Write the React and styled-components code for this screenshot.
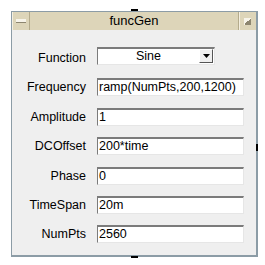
import React from "react"
import styled, { createGlobalStyle } from "styled-components"

const GlobalStyle = createGlobalStyle`
  html, body {
    margin: 0;
    padding: 0;
    background: #ffffff;
  }
  body {
    font-family: "Liberation Sans", Arial, sans-serif;
  }
`

const Page = styled.div`
  width: 265px;
  height: 265px;
  padding: 11px 0 0 11px;
  box-sizing: border-box;
`

const Window = styled.div`
  position: relative;
  width: 247px;
  height: 246px;
  box-sizing: border-box;
  border-left: 1px solid #8c9ca6;
  border-right: 2px solid #8c9ca6;
  border-bottom: 2px solid #8c9ca6;
  border-top: 1px solid #8c9ca6;
  background: #efefef;
  display: flex;
  flex-direction: column;
`

const Handle = styled.div`
  position: absolute;
  background: #000;
  width: ${(p) => (p.$side === "right" ? 2 : 7)}px;
  height: ${(p) => (p.$side === "right" ? 7 : 2)}px;
  ${(p) => p.$side === "top" && "top: -3px; left: 119px;"}
  ${(p) => p.$side === "bottom" && "bottom: -3px; left: 119px;"}
  ${(p) => p.$side === "right" && "right: -2px; top: 132px;"}
`

const TitleBar = styled.div`
  height: 18px;
  display: flex;
  align-items: stretch;
  background: #ddd5b9;
  flex-shrink: 0;
`

const TitleButton = styled.div`
  width: 17px;
  display: flex;
  align-items: center;
  justify-content: center;
  border-${(p) => (p.$right ? "left" : "right")}: 1px solid #b4ab8c;
  box-shadow: inset 1px 0 #f4efe0;
`

const MinusGlyph = styled.div`
  width: 10px;
  height: 3px;
  background: #f7f4ea;
  border-bottom: 1px solid #8d8670;
`

const MaxGlyph = styled.div`
  width: 7px;
  height: 7px;
  background: linear-gradient(135deg, #f7f4ea 50%, #8d8670 50%);
`

const Title = styled.div`
  flex: 1;
  text-align: center;
  font-size: 13px;
  line-height: 18px;
  color: #000;
`

const Form = styled.div`
  display: grid;
  grid-template-columns: 74px 147px;
  column-gap: 11px;
  row-gap: 11.4px;
  grid-auto-rows: 18px;
  padding: 19px 0 0 0;
  align-items: center;
`

const Label = styled.div`
  text-align: right;
  font-size: 12.5px;
  color: #000;
  line-height: 18px;
`

const Field = styled.div`
  height: 18px;
  box-sizing: border-box;
  background: #ffffff;
  border-top: 2px solid #7b7b7b;
  border-left: 1px solid #7b7b7b;
  border-right: 1px solid #e6e6e6;
  border-bottom: 1px solid #e6e6e6;
  font-size: 12.5px;
  line-height: 15px;
  padding-left: 1px;
  color: #000;
  white-space: nowrap;
  overflow: hidden;
`

const Select = styled.div`
  width: 118px;
  height: 18px;
  box-sizing: border-box;
  background: #ffffff;
  border-top: 2px solid #7b7b7b;
  border-left: 1px solid #7b7b7b;
  border-right: 1px solid #e6e6e6;
  border-bottom: 1px solid #e6e6e6;
  display: flex;
  align-items: stretch;
  margin-bottom: 4px;
`

const SelectText = styled.div`
  flex: 1;
  text-align: center;
  font-size: 12.5px;
  line-height: 15px;
`

const ArrowButton = styled.div`
  width: 14px;
  background: #efefef;
  border-right: 1px solid #555;
  border-bottom: 1px solid #555;
  border-top: 1px solid #fff;
  border-left: 1px solid #fff;
  box-sizing: border-box;
  display: flex;
  align-items: center;
  justify-content: center;
  margin: 0 1px 1px 0;
`

const fields = [
  ["Frequency", "ramp(NumPts,200,1200)"],
  ["Amplitude", "1"],
  ["DCOffset", "200*time"],
  ["Phase", "0"],
  ["TimeSpan", "20m"],
  ["NumPts", "2560"],
]

export default function App() {
  return (
    <Page>
      <GlobalStyle />
      <Window>
        <Handle $side="top" />
        <Handle $side="right" />
        <Handle $side="bottom" />
        <TitleBar>
          <TitleButton>
            <MinusGlyph />
          </TitleButton>
          <Title>funcGen</Title>
          <TitleButton $right>
            <MaxGlyph />
          </TitleButton>
        </TitleBar>
        <Form>
          <Label>Function</Label>
          <Select>
            <SelectText>Sine</SelectText>
            <ArrowButton>
              <svg width="7" height="4" viewBox="0 0 7 4">
                <polygon points="0,0 7,0 3.5,4" fill="#000" />
              </svg>
            </ArrowButton>
          </Select>
          {fields.map(([label, value]) => (
            <React.Fragment key={label}>
              <Label>{label}</Label>
              <Field>{value}</Field>
            </React.Fragment>
          ))}
        </Form>
      </Window>
    </Page>
  )
}
